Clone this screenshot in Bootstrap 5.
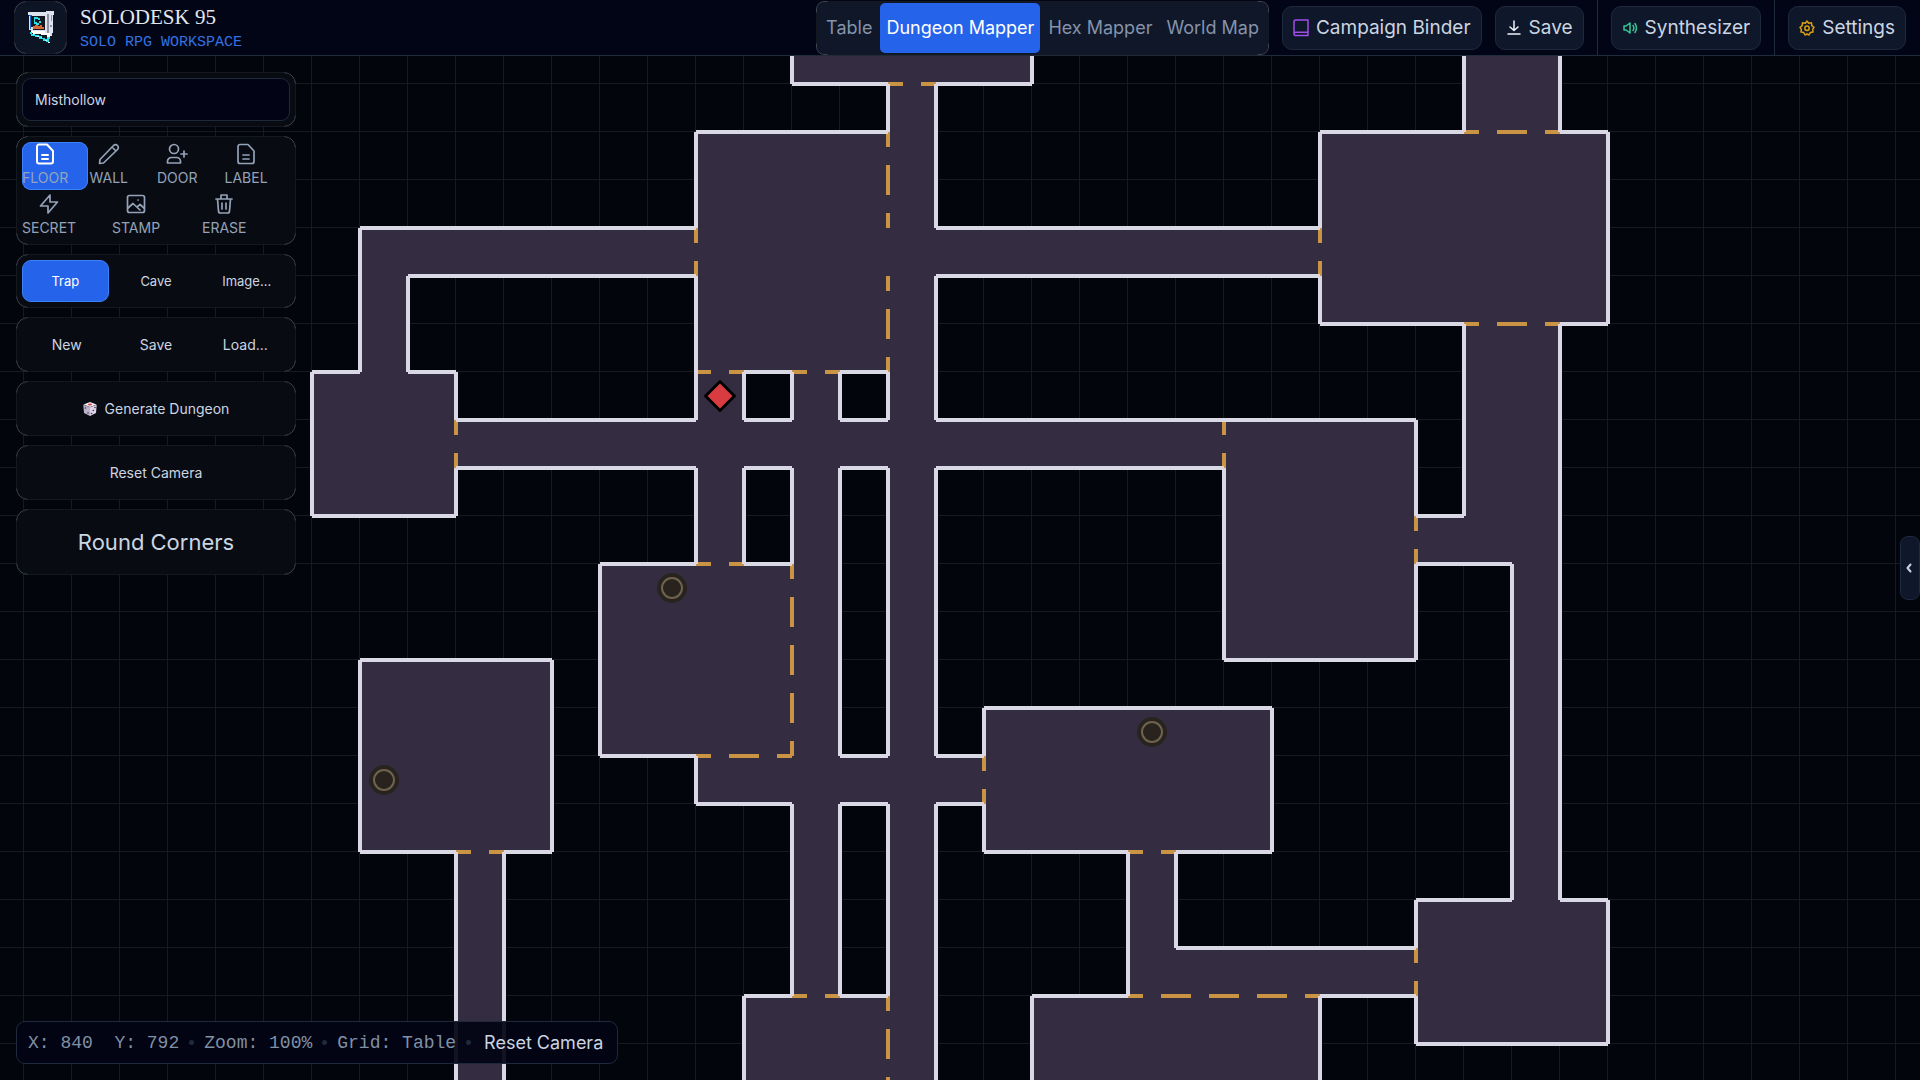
<!DOCTYPE html>
<html lang="en">
<head>
<meta charset="utf-8">
<meta name="viewport" content="width=device-width, initial-scale=1">
<title>Solodesk 95 - Dungeon Mapper</title>
<link href="https://cdn.jsdelivr.net/npm/bootstrap@5.3.0/dist/css/bootstrap.min.css" rel="stylesheet">
<style>
  :root { --ink: #cbd5e1; --dim: #94a3b8; --line: #1e293b; --blue: #2563eb; }
  body { background: #02050c; color: var(--ink); font-family: Inter, sans-serif; font-size: 18px; line-height: 24px; }
  button, input { font-family: inherit; }
  button { color: inherit; }

  /* faint frame with brighter corners */
  .frame { position: relative; border: 1px solid #14181f; border-radius: 12px; }
  .frame::after {
    --spot: #000 11px, transparent 12px;
    content: ""; position: absolute; inset: -1px; pointer-events: none;
    border: 1px solid #3d424c; border-radius: inherit;
    -webkit-mask-image: radial-gradient(circle at 0 0, var(--spot)), radial-gradient(circle at 100% 0, var(--spot)), radial-gradient(circle at 0 100%, var(--spot)), radial-gradient(circle at 100% 100%, var(--spot));
  }

  .topbar { height: 56px; background: #020516; border-bottom: 1px solid #1f2a3b; padding: 0 14px; }
  .logo-box { width: 53px; height: 53px; background: #0d1424; }
  .brand { gap: 13px; }
  .brand-text { gap: 2px; }
  .brand-name { font-family: "Liberation Serif", serif; font-size: 21px; line-height: 28px; color: #e2e8f0; }
  .brand-sub { font-family: "Liberation Mono", monospace; font-size: 15px; line-height: 20px; color: #3372e0; }
  .bar-tools { gap: 13px; }
  .mode-tabs { background: #0f1729; height: 54px; padding: 1px 3px; gap: 2px; border-radius: 8px; }
  .mode-tabs button { border: 0; background: none; border-radius: 5px; padding: 0 6px; height: 50px; color: #8493a9; }
  .mode-tabs button.active { background: var(--blue); color: #fff; }
  .tool-btn { height: 44px; background: #0f172a; border: 1px solid var(--line); border-radius: 10px; color: var(--ink); padding: 0 10px; gap: 7px; font-size: 19px; }
  .split { width: 1px; height: 56px; background: #1f2a3b; }

  .stage { min-height: 0; }
  .side { position: absolute; left: 16px; top: 16px; width: 280px; gap: 9px; }
  .panel { background: rgba(9, 12, 20, .95); padding: 5px; font-size: 14px; }
  .name-box { height: 43px; background: #020314; border: 1px solid var(--line); border-radius: 9px; color: var(--ink); font-size: 14px; padding: 0 12px; }
  .name-box:focus { outline: 1px solid var(--blue); }
  .tools { gap: 2px; padding-bottom: 4px; }
  .tool-row { gap: 2px; }
  .tools button { border: 0; background: none; padding: 0; height: 48px; border-radius: 9px; color: var(--dim); flex: 1 1 0; min-width: 0; font-size: 14px; line-height: 24px; }
  .tools button.active { background: var(--blue); box-shadow: inset 0 0 0 1px #3b82f6; }
  .tools button.active svg { color: #fff; }
  .tools span { display: inline-flex; flex-direction: column; align-items: center; }
  .acts button { border: 1px solid transparent; background: none; border-radius: 9px; height: 43px; padding: 0; flex: 1 1 0; }
  .acts button.active { background: var(--blue); border-color: #3b82f6; color: #fff; }
  .acts.short { gap: 4px; }
  .acts.short button { height: 42px; font-size: 13px; }
  .acts.tall button { height: 54px; font-size: 22px; }

  .status { position: absolute; left: 16px; bottom: 16px; height: 43px; padding: 0 11px; gap: 10px; background: rgba(2, 4, 20, .93); border: 1px solid var(--line); border-radius: 9px; }
  .mono { font-family: "Liberation Mono", monospace; color: #8090a5; white-space: pre; }
  .pip { width: 5px; height: 5px; border-radius: 50%; background: #1f2a3b; }
  .status button { border: 0; background: none; padding: 0 3px; }
  .drawer { position: absolute; right: 0; top: 480px; width: 20px; height: 64px; padding: 0 2px 0 0; background: #0f172a; border: 1px solid var(--line); border-radius: 8px; }
  .ic { fill: none; stroke: currentColor; stroke-width: 2; stroke-linecap: round; stroke-linejoin: round; flex: none; }
</style>
<script src="https://cdn.jsdelivr.net/npm/bootstrap@5.3.0/dist/js/bootstrap.bundle.min.js"></script>
</head>
<body class="d-flex flex-column vh-100 overflow-hidden">

<header class="topbar d-flex align-items-center justify-content-between flex-shrink-0">
  <div class="brand d-flex align-items-center">
    <div class="logo-box frame d-flex align-items-center justify-content-center">
      <svg width="28" height="34" viewBox="0 0 28 34" shape-rendering="crispEdges" aria-label="Solodesk logo">
        <path fill="#dfe3ee" d="M1 1H19V0H27V4H26V22H25V25H20V22H4V19H2V4H1z"/>
        <path fill="#8c93a8" d="M20 3H22V22H20zM24 4H25V10H24zM23 14H25V16H23z"/>
        <path fill="#15171e" d="M4 5H18V19H6V16H4z"/>
        <path fill="#1d6fd0" d="M3 5H4V18H3zM2 4H5V5H2z"/>
        <path fill="#27e0e8" d="M7 6H11V7H13V9H11V8H8V11H10V13H7zM12 10H14V12H12zM9 12H12V14H9z"/>
        <path fill="#d8683a" d="M6 15H8V14H11V15H13V14H15V16H17V18H6z"/>
        <path fill="#fff" d="M4 20H18V22H23V26H20V24H14V23H6V22H4z"/>
        <path fill="#27e0e8" d="M3 21H5V23H8V24H12V25H15V27H18V28H22V31H19V30H16V28H12V26H8V25H4V23H3zM20 26H23V28H20z"/>
        <path fill="#e9f8ff" d="M6 23H7V24H6zM10 25H12V26H10zM14 26H15V27H14zM18 29H20V30H18zM21 31H23V32H21z"/>
      </svg>
    </div>
    <div class="brand-text d-flex flex-column text-nowrap">
      <div class="brand-name">SOLODESK 95</div>
      <div class="brand-sub">SOLO RPG WORKSPACE</div>
    </div>
  </div>

  <div class="bar-tools d-flex align-items-center text-nowrap">
    <nav class="mode-tabs frame d-flex align-items-center" aria-label="Workspace mode">
      <button type="button">Table</button>
      <button type="button" class="active">Dungeon Mapper</button>
      <button type="button">Hex Mapper</button>
      <button type="button">World Map</button>
    </nav>
    <button type="button" class="tool-btn d-flex align-items-center">
      <svg class="ic" width="16" height="18" viewBox="0 0 16 18" color="#a04ee8"><path stroke-width="1.5" d="M1 15V3a2 2 0 0 1 2-2H15V16.500H2.500a1.500 1.500 0 0 1-1.500-1.500a1.800 1.800 0 0 1 1.800-1.800H15"/></svg>
      Campaign Binder</button>
    <button type="button" class="tool-btn d-flex align-items-center">
      <svg class="ic" width="16" height="18" viewBox="0 0 16 18" color="#f1f5f9"><path stroke-width="1.500" d="M8 2V11M4 8L8 11.500L12 8M2 15H14"/></svg>
      Save</button>
    <span class="split"></span>
    <button type="button" class="tool-btn d-flex align-items-center">
      <svg class="ic" width="16" height="18" viewBox="0 0 16 18" color="#34c896"><path stroke-width="1.500" d="M2 7V11H4L8 14V4L4 7zM11 6.500q1.700 2.500 0 5M13 4.500q3 4.500 0 9"/></svg>
      Synthesizer</button>
    <span class="split"></span>
    <button type="button" class="tool-btn d-flex align-items-center">
      <svg class="ic" width="16" height="18" viewBox="0 0 16 18" color="#d9a010"><g stroke-width="1.500"><path d="M6.300 4.200L8 2L9.700 4.200L12.500 3.800L12.800 6.600L15 8.300L13.700 10.300L14 13L11.300 13.600L10 16L8 15L6 16L4.700 13.600L2 13L2.300 10.300L1 8.300L3.200 6.600L3.500 3.800z"/><circle cx="8" cy="9.300" r="2.200"/></g></svg>
      Settings</button>
  </div>
</header>

<main class="stage position-relative flex-grow-1">
  <svg class="d-block w-100 h-100" role="img" aria-label="Dungeon map of Misthollow">
    <defs>
      <pattern id="grid" x="23" y="27" width="48" height="48" patternUnits="userSpaceOnUse"><path fill="#171a21" d="M0 0H48V1H1V48H0z"/></pattern>
      <g id="pit"><circle r="15" fill="#29231f"/><circle r="10" fill="none" stroke="#6f634d" stroke-width="2"/></g>
    </defs>
    <rect width="100%" height="100%" fill="url(#grid)"/>
    <g transform="translate(24 28) scale(48)" fill="none" stroke-width=".083333">
      <path fill="#342d41" d="M16 -1H21V0H16zM18 0H19V22H18zM14 1H18V6H14zM7 3H14V4H7zM7 4H8V6H7zM6 6H9V9H6zM9 7H25V8H9zM18 3H27V4H18zM14 6H15V10H14zM16 6H17V19H16zM12 10H16V14H12zM14 14H20V15H14zM20 13H26V16H20zM23 16H24V19H23zM24 18H29V19H24zM21 19H27V22H21zM29 17H33V20H29zM31 9H32V17H31zM30 5H32V10H30zM29 9H30V10H29zM27 1H33V5H27zM30 -1H32V1H30zM25 7H29V12H25zM7 12H11V16H7zM9 16H10V22H9zM15 19H18V22H15z"/>
      <path stroke="#cb9445" stroke-dasharray=".3125 .375 .3125 0" d="M18 0H19M30 1H32M30 5H32M14 6H15M16 6H17M14 10H15M14 14H16M9 16H10M23 16H24M16 19H17M23 19H27M14 3V4M9 7V8M18 1V3M18 4V6M18 19V22M16 10V14M25 7V8M27 3V4M29 9V10M29 18V19M20 14V15"/>
      <path stroke="#d9d9e5" d="M16 0H18M19 0H21M14 1H18M27 1H30M32 1H33M7 3H14M19 3H27M8 4H14M19 4H27M27 5H30M32 5H33M6 6H7M8 6H9M15 6H16M17 6H18M9 7H14M15 7H16M17 7H18M19 7H29M9 8H14M15 8H16M17 8H18M19 8H25M6 9H9M29 9H30M12 10H14M15 10H16M29 10H31M7 12H11M25 12H29M20 13H26M12 14H14M17 14H18M19 14H20M14 15H16M17 15H18M19 15H20M7 16H9M10 16H11M20 16H23M24 16H26M29 17H31M32 17H33M24 18H29M15 19H16M17 19H18M21 19H23M27 19H29M29 20H33"/>
      <path stroke="#d9d9e5" d="M6 6V9M7 3V6M7 12V16M8 4V6M9 6V7M9 8V9M9 16V22M10 16V22M11 12V16M12 10V14M14 1V3M14 4V7M14 8V10M14 14V15M15 6V7M15 8V10M15 19V22M16 -1V0M16 6V7M16 8V10M16 15V19M17 6V7M17 8V14M17 15V19M18 0V1M18 6V7M18 8V14M18 15V19M19 0V3M19 4V7M19 8V14M19 15V22M20 13V14M20 15V16M21 -1V0M21 19V22M23 16V19M24 16V18M25 8V12M26 13V16M27 1V3M27 4V5M27 19V22M29 7V9M29 10V12M29 17V18M29 19V20M30 -1V1M30 5V9M31 10V17M32 -1V1M32 5V17M33 1V5M33 17V20"/>
    </g>
    <use href="#pit" x="672" y="532"/>
    <use href="#pit" x="384" y="724"/>
    <use href="#pit" x="1152" y="676"/>
    <path d="M720 325.500L734.500 340L720 354.500L705.500 340z" fill="#d93c40" stroke="#000" stroke-width="3" stroke-linejoin="round"/>
  </svg>

  <aside class="side d-flex flex-column">
    <div class="panel frame d-flex">
      <input class="name-box w-100" type="text" value="Misthollow" aria-label="Map name">
    </div>
    <div class="panel frame tools d-flex flex-column">
      <div class="tool-row d-flex">
        <button type="button" class="active d-flex align-items-start"><span><svg class="ic" width="24" height="24" viewBox="0 0 24 24"><path d="M14 2.500H6a2 2 0 0 0-2 2V19.500a2 2 0 0 0 2 2H18a2 2 0 0 0 2-2V9zM9 13H15M9 17H15"/></svg>FLOOR</span></button>
        <button type="button" class="d-flex align-items-start"><span><svg class="ic" width="24" height="24" viewBox="0 0 24 24"><path stroke-width="1.700" d="M16.500 3.500a2.500 2.500 0 0 1 4 4L6.500 21L2.500 21.500L3 17.500zM15 5L19 9"/></svg>WALL</span></button>
        <button type="button" class="d-flex align-items-start"><span><svg class="ic" width="24" height="24" viewBox="0 0 24 24"><path stroke-width="1.700" d="M2.500 21V19.500a4 4 0 0 1 4-4H11.500a4 4 0 0 1 4 4V21zM19 9V15M16 12H22"/><circle cx="9" cy="7" r="4.500" stroke-width="1.700"/></svg>DOOR</span></button>
        <button type="button" class="d-flex align-items-start"><span><svg class="ic" width="24" height="24" viewBox="0 0 24 24"><path stroke-width="1.700" d="M14 2.500H6a2 2 0 0 0-2 2V19.500a2 2 0 0 0 2 2H18a2 2 0 0 0 2-2V9zM9 13H15M9 17H15"/></svg>LABEL</span></button>
      </div>
      <div class="tool-row d-flex">
        <button type="button" class="d-flex align-items-start"><span><svg class="ic" width="24" height="24" viewBox="0 0 24 24"><path stroke-width="1.700" d="M13 3L3.500 14H11V21L20.500 10H13z"/></svg>SECRET</span></button>
        <button type="button" class="d-flex align-items-start"><span><svg class="ic" width="24" height="24" viewBox="0 0 24 24"><g stroke-width="1.700"><rect x="3.500" y="3.500" width="17" height="17" rx="2"/><path d="M4 16L9 11.500L16 18M13 15L16 12.500L20 16M14 8H14.100"/></g></svg>STAMP</span></button>
        <button type="button" class="d-flex align-items-start"><span><svg class="ic" width="24" height="24" viewBox="0 0 24 24"><path stroke-width="1.700" d="M4 7H20M5.500 7L6.500 19a2 2 0 0 0 2 2H15.500a2 2 0 0 0 2-2L18.500 7M9 7V3H15V7M10 11V17M14 11V17"/></svg>ERASE</span></button>
      </div>
    </div>
    <div class="panel frame acts short d-flex">
      <button type="button" class="active">Trap</button><button type="button">Cave</button><button type="button">Image...</button>
    </div>
    <div class="panel frame acts d-flex">
      <button type="button">New</button><button type="button">Save</button><button type="button">Load...</button>
    </div>
    <div class="panel frame acts d-flex">
      <button type="button" class="d-flex align-items-center justify-content-center gap-2">
        <svg width="14" height="14" viewBox="0 0 14 14"><path fill="#f3eef6" d="M7 0L13.500 2.500L7 5L.5 2.500z"/><path fill="#bdb3c6" d="M.3 2.800L7 5.200V14L1 11z"/><path fill="#ddd3e6" d="M13.700 2.800L7 5.200V14L13 11z"/><ellipse cx="7" cy="2.400" rx="2" ry="1" fill="#e03c3c"/><g fill="#3d3560"><circle cx="2.500" cy="6" r=".8"/><circle cx="5" cy="11" r=".8"/><circle cx="12" cy="5.500" r=".8"/><circle cx="10.300" cy="8.500" r=".8"/><circle cx="8.500" cy="11.500" r=".8"/></g></svg>
        Generate Dungeon</button>
    </div>
    <div class="panel frame acts d-flex"><button type="button">Reset Camera</button></div>
    <div class="panel frame acts tall d-flex"><button type="button">Round Corners</button></div>
  </aside>

  <button type="button" class="drawer" aria-label="Open side drawer">
    <svg class="ic d-block mx-auto" width="8" height="10" viewBox="0 0 8 10"><path d="M5.500 1.500L2.500 5L5.500 8.500"/></svg>
  </button>

  <div class="status d-flex align-items-center text-nowrap">
    <span class="mono">X: 840  Y: 792</span><span class="pip"></span>
    <span class="mono">Zoom: 100%</span><span class="pip"></span>
    <span class="mono">Grid: Table</span><span class="pip"></span>
    <button type="button">Reset Camera</button>
  </div>
</main>
</body>
</html>
